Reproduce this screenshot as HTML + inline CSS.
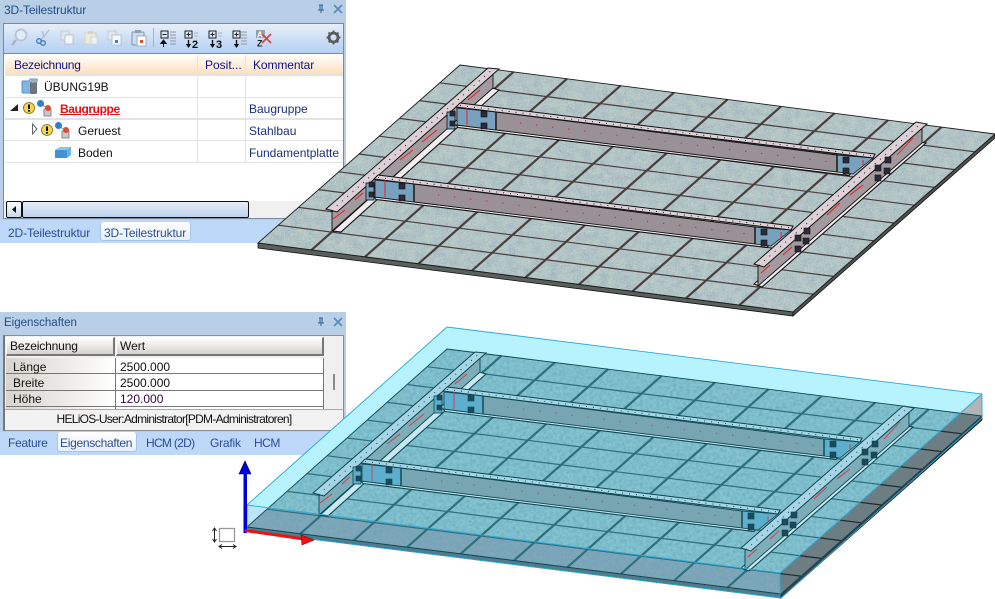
<!DOCTYPE html>
<html><head><meta charset="utf-8"><title>3D-Teilestruktur</title>
<style>
html,body{margin:0;padding:0;background:#fff;width:995px;height:599px;overflow:hidden}
body{position:relative;font-family:"Liberation Sans",sans-serif;font-size:12px}
.a{position:absolute}
.t{position:absolute;white-space:nowrap;line-height:14px;font-size:12px}
.navy{color:#10107f}.blue{color:#1a2f7a}.tab{color:#2a4c9a}.blk{color:#111}
svg{position:absolute;left:0;top:0}
.fl{fill:var(--fl);stroke:var(--ol);stroke-width:1}
.bf{fill:var(--bf);stroke:var(--ol);stroke-width:1.1}
.wb{fill:var(--wb);stroke:var(--ol);stroke-width:.9}
.xw{fill:var(--xw);stroke:var(--ol);stroke-width:.9}
.bl{fill:var(--bl);stroke:var(--ol);stroke-width:.8}
.bt{fill:var(--bt);stroke:var(--ol);stroke-width:.6}
.dt{fill:none;stroke:var(--ol);stroke-width:1;stroke-dasharray:1 6}
.rd{fill:none;stroke:var(--rd);stroke-width:.9}
.rdd{fill:none;stroke:var(--rd);stroke-width:1.1;stroke-dasharray:1.2 15}
</style></head><body>

<!-- Panel 1 -->
<div class="a" style="left:0;top:0;width:346px;height:243px;background:#b9cfe8"></div>
<div class="t" style="left:4px;top:3px;color:#1f4e84;letter-spacing:-.12px">3D-Teilestruktur</div>
<div class="a" style="left:3px;top:23px;width:341px;height:196px;background:#fff;border:1px solid #7d8a99;box-sizing:border-box"></div>
<div class="a" style="left:4px;top:24px;width:339px;height:29px;background:linear-gradient(#e6effa,#b4cff2);border-bottom:1px solid #7d8a99"></div>
<div class="a" style="left:5px;top:54px;width:338px;height:20px;background:linear-gradient(#fff,#fde0bd)"></div>
<div class="a" style="left:5px;top:74px;width:338px;height:2px;background:#e3e3e3"></div>
<div class="a" style="left:5px;top:97px;width:338px;height:1px;background:#e3e3e3"></div>
<div class="a" style="left:5px;top:118px;width:338px;height:2px;background:#e3e3e3"></div>
<div class="a" style="left:5px;top:140px;width:338px;height:1px;background:#e3e3e3"></div>
<div class="a" style="left:5px;top:162px;width:338px;height:1px;background:#e3e3e3"></div>
<div class="a" style="left:197px;top:55px;width:1px;height:108px;background:#e3e3e3"></div>
<div class="a" style="left:245px;top:55px;width:1px;height:108px;background:#e3e3e3"></div>
<div class="t navy" style="left:14px;top:58px;letter-spacing:-.25px">Bezeichnung</div>
<div class="t navy" style="left:205px;top:58px">Posit...</div>
<div class="t navy" style="left:253px;top:58px;letter-spacing:-.1px">Kommentar</div>
<div class="t blk" style="left:44px;top:80px">ÜBUNG19B</div>
<div class="t" style="left:60px;top:102px;color:#e01010;font-weight:bold;text-decoration:underline;letter-spacing:-.4px">Baugruppe</div>
<div class="t blue" style="left:249px;top:102px">Baugruppe</div>
<div class="t blk" style="left:78px;top:124px">Geruest</div>
<div class="t blue" style="left:249px;top:124px">Stahlbau</div>
<div class="t blk" style="left:78px;top:146px">Boden</div>
<div class="t blue" style="left:249px;top:146px">Fundamentplatte</div>
<div class="a" style="left:4px;top:201px;width:339px;height:17px;background:#f0f0f0"></div>
<div class="a" style="left:6px;top:201px;width:16px;height:17px;box-sizing:border-box;background:linear-gradient(#fff,#c8d8ec);border:1px solid #111;border-radius:2px"></div>
<div class="a" style="left:22px;top:201px;width:227px;height:17px;box-sizing:border-box;background:linear-gradient(#e6eefa,#bcd0ea);border:1px solid #111;border-radius:2px"></div>
<div class="a" style="left:0;top:220px;width:346px;height:23px;background:#bdd8f8"></div>
<div class="t tab" style="left:8px;top:226px;letter-spacing:-.12px">2D-Teilestruktur</div>
<div class="a" style="left:100px;top:222px;width:91px;height:19px;box-sizing:border-box;background:linear-gradient(#fff,#e6f0fb);border:1px solid #a7c4e6;border-top:0;border-radius:3px"></div>
<div class="t tab" style="left:104px;top:226px;letter-spacing:-.12px">3D-Teilestruktur</div>

<!-- Panel 2 -->
<div class="a" style="left:0;top:312px;width:346px;height:143px;background:#b9cfe8"></div>
<div class="t" style="left:4px;top:316px;color:#1f4e84;font-size:11.5px">Eigenschaften</div>
<div class="a" style="left:3px;top:335px;width:341px;height:96px;box-sizing:border-box;background:#f0f0f0;border:1px solid #8c8c8c;border-left:2px solid #777"></div>
<div class="a" style="left:6px;top:337px;width:109px;height:19px;box-sizing:border-box;background:linear-gradient(#fff,#d6d2cc);border:1px solid #fff;border-right:2px solid #777;border-bottom:2px solid #777"></div>
<div class="a" style="left:116px;top:337px;width:208px;height:19px;box-sizing:border-box;background:linear-gradient(#fff,#d6d2cc);border:1px solid #fff;border-right:2px solid #777;border-bottom:2px solid #777"></div>
<div class="a" style="left:6px;top:358px;width:109px;height:51px;background:linear-gradient(90deg,#d8d4ce,#fff)"></div>
<div class="a" style="left:116px;top:358px;width:207px;height:51px;background:#fff"></div>
<div class="a" style="left:6px;top:373px;width:317px;height:1px;background:#777"></div>
<div class="a" style="left:6px;top:390px;width:317px;height:1px;background:#777"></div>
<div class="a" style="left:6px;top:406px;width:317px;height:1px;background:#777"></div>
<div class="a" style="left:115px;top:358px;width:1px;height:51px;background:#777"></div>
<div class="a" style="left:323px;top:358px;width:1px;height:51px;background:#777"></div>
<div class="a" style="left:333px;top:374px;width:2px;height:16px;background:#8a8a8a"></div>
<div class="a" style="left:5px;top:409px;width:338px;height:1px;background:#aaa"></div>
<div class="a" style="left:5px;top:410px;width:338px;height:19px;background:#f2f2f2"></div>
<div class="t blk" style="left:10px;top:339px;letter-spacing:-.15px">Bezeichnung</div>
<div class="t blk" style="left:120px;top:339px">Wert</div>
<div class="t blk" style="left:13px;top:360px">Länge</div>
<div class="t blk" style="left:13px;top:376px">Breite</div>
<div class="t blk" style="left:13px;top:392px">Höhe</div>
<div class="t blk" style="left:120px;top:360px">2500.000</div>
<div class="t blk" style="left:120px;top:376px">2500.000</div>
<div class="t" style="left:120px;top:392px;color:#300840">120.000</div>
<div class="t blk" style="left:5px;top:412px;width:338px;text-align:center;letter-spacing:-.72px">HELiOS-User:Administrator[PDM-Administratoren]</div>
<div class="a" style="left:0;top:432px;width:346px;height:23px;background:#bdd8f8"></div>
<div class="a" style="left:57px;top:432px;width:80px;height:20px;box-sizing:border-box;background:linear-gradient(#fff,#e6f0fb);border:1px solid #a7c4e6;border-top:0;border-radius:3px"></div>
<div class="t tab" style="left:8px;top:436px;letter-spacing:-.25px">Feature</div>
<div class="t tab" style="left:60px;top:436px;letter-spacing:-.3px">Eigenschaften</div>
<div class="t tab" style="left:146px;top:436px;letter-spacing:-.7px">HCM (2D)</div>
<div class="t tab" style="left:210px;top:436px;letter-spacing:-.2px">Grafik</div>
<div class="t tab" style="left:254px;top:436px;letter-spacing:-.5px">HCM</div>

<!-- Panel icons -->
<svg width="346" height="455" viewBox="0 0 346 455">
 <defs>
  <g id="pc"><path d="M319 5h4M320 5v5h2V5M318 10h6M321 10v3" fill="none" stroke="#33608f" stroke-width="1"/><path d="M334 5l8 8M342 5l-8 8" stroke="#5d88b8" stroke-width="1.6"/></g>
  <g id="warn"><circle cx="0" cy="0" r="5.5" fill="#f3d84a" stroke="#7b6a1a" stroke-width=".8"/><rect x="-1" y="-3.5" width="2" height="4.5" fill="#111"/><rect x="-1" y="2" width="2" height="1.6" fill="#111"/></g>
  <g id="asm"><path d="M3 3l8 6" stroke="#8aa" stroke-width="1.3"/><rect x="7" y="9" width="7" height="7" fill="#c9c9c9" stroke="#8a8a8a"/><circle cx="3.5" cy="3.5" r="3.5" fill="#2f7fc9"/><circle cx="11" cy="8" r="3" fill="#dd4a3a"/></g>
  <g id="sub"><rect x="0" y="0" width="7" height="7" fill="#dbe6f5" stroke="#222" stroke-width="1"/><path d="M1.5 3.5h4M3.5 1.5v4" stroke="#222"/></g>
  <g id="down"><path d="M3.5 9v6" stroke="#111" stroke-width="1.4"/><path d="M.8 13h5.4L3.5 17z" fill="#111"/></g>
 </defs>
 <use href="#pc"/><use href="#pc" y="313"/>
 <!-- magnifier -->
 <circle cx="21" cy="35" r="5.5" fill="#e2ecf8" stroke="#b7c2cf" stroke-width="1.8"/><path d="M16 40l-4 5" stroke="#a9b2bd" stroke-width="2.4"/>
 <!-- scissors -->
 <path d="M49 30l-8 10M42 31l2 6" stroke="#b5bfcb" stroke-width="1.4" fill="none"/><circle cx="39" cy="41" r="2.3" fill="none" stroke="#3f7fc6" stroke-width="1.4"/><circle cx="43" cy="43" r="2.3" fill="none" stroke="#3f7fc6" stroke-width="1.4"/>
 <!-- copy -->
 <rect x="61" y="31" width="8" height="9" fill="#dfe6ee" stroke="#c2ccd6"/><rect x="65" y="35" width="8" height="9" fill="#f4f7fb" stroke="#b9c5d1"/>
 <!-- paste disabled -->
 <rect x="85" y="33" width="11" height="11" fill="#efe9da" stroke="#d9d3c2"/><rect x="88" y="31" width="5" height="3" fill="#d9d3c2"/><rect x="91" y="37" width="6" height="7" fill="#eef2f6" stroke="#cfd6dd"/>
 <!-- copy dot -->
 <rect x="108" y="31" width="8" height="9" fill="#dfe6ee" stroke="#c2ccd6"/><rect x="112" y="35" width="9" height="10" fill="#f6f9fc" stroke="#b9c5d1"/><rect x="115" y="40" width="3" height="3" fill="#2f87cf"/>
 <!-- paste dot -->
 <rect x="132" y="32" width="12" height="13" rx="1" fill="#cfdcea" stroke="#8294a8"/><rect x="135" y="30" width="6" height="3" fill="#8ea0b3"/><rect x="137" y="36" width="9" height="10" fill="#fff" stroke="#9fb0c0"/><rect x="140" y="40" width="3" height="3" fill="#d9532f"/>
 <path d="M153.500 28v19" stroke="#a6b4c4"/>
 <!-- expand/collapse -->
 <g transform="translate(161,31)"><rect x="0" y="0" width="7" height="7" fill="#dbe6f5" stroke="#222"/><path d="M1.500 3.500h4" stroke="#222"/></g>
 <path d="M163.500 40l-2.700 3.500h5.400zM163.500 43v4" fill="#111" stroke="#111" stroke-width="1"/>
 <path d="M170 32h6M170 35h6M170 38h6M170 41h6M170 44h6" stroke="#8b98a6"/>
 <use href="#sub" x="185" y="31"/><use href="#down" x="185" y="31"/>
 <text x="192" y="48" font-size="11" font-weight="bold" fill="#111" font-family="Liberation Sans">2</text><path d="M194 33h4M194 36h4" stroke="#a9b4c0"/>
 <use href="#sub" x="209" y="31"/><use href="#down" x="209" y="31"/>
 <text x="216" y="48" font-size="11" font-weight="bold" fill="#111" font-family="Liberation Sans">3</text><path d="M218 33h4M218 36h4" stroke="#a9b4c0"/>
 <use href="#sub" x="233" y="31"/><use href="#down" x="233" y="31"/>
 <path d="M241 32h6M241 35h6M241 38h6M241 41h6M241 44h6" stroke="#8b98a6"/>
 <!-- A-Z x -->
 <rect x="256" y="30" width="9" height="8" fill="#9aa0a8"/>
 <text x="257" y="37.500" font-size="8" font-weight="bold" fill="#fff" font-family="Liberation Sans">A</text>
 <text x="257" y="46.500" font-size="9" font-weight="bold" fill="#222" font-family="Liberation Sans">Z</text>
 <path d="M262 34l9 9M271 34l-9 9" stroke="#e0402f" stroke-width="1.600"/>
 <!-- gear -->
 <circle cx="333.500" cy="37.500" r="4.500" fill="none" stroke="#5a5a5a" stroke-width="2.800"/>
 <path d="M333.500 30.500v14M326.500 37.500h14M328.500 32.500l10 10M338.500 32.500l-10 10" stroke="#5a5a5a" stroke-width="1.800" stroke-dasharray="2 10"/>
 <!-- scroll arrow -->
 <path d="M16 206v7l-4-3.500z" fill="#111"/>
 <!-- tree icons -->
 <rect x="22" y="81" width="13" height="12" rx="1" fill="#7fb6e4" stroke="#5a93c8"/><path d="M22 81h7l1-2h7v3" fill="#a8d0ef" stroke="#5a93c8"/>
 <rect x="30" y="81" width="7" height="13" rx="1.500" fill="#6f7478"/><ellipse cx="33.500" cy="81.500" rx="3.500" ry="1.500" fill="#a4a9ad"/>
 <path d="M10 111h8v-7z" fill="#222"/>
 <use href="#warn" x="29" y="108"/><use href="#asm" x="37" y="100"/>
 <path d="M32.500 124l4.500 5-4.500 5z" fill="#fff" stroke="#666"/>
 <use href="#warn" x="47" y="130"/><use href="#asm" x="55" y="122"/>
 <path d="M55 150l5-3h11v8l-4 3H55z" fill="#3f94d8"/><path d="M55 150l5-3h11l-4 3z" fill="#8cc5ef"/><path d="M67 150l4-3v8l-4 3z" fill="#6fb0e3"/>
</svg>

<!-- 3D models -->
<svg width="995" height="599" viewBox="0 0 995 599" style="pointer-events:none">
 <defs>
  <filter id="nz" x="0" y="0" width="100%" height="100%" color-interpolation-filters="sRGB">
   <feTurbulence type="fractalNoise" baseFrequency=".12" numOctaves="4" seed="7"/>
   <feColorMatrix values="0 0 0 0 .5  0 0 0 0 .6  0 0 0 0 .7  .55 .55 0 0 -.42"/>
  </filter>
  <filter id="nw" x="0" y="0" width="100%" height="100%" color-interpolation-filters="sRGB">
   <feTurbulence type="fractalNoise" baseFrequency=".7" numOctaves="2" seed="3"/>
   <feColorMatrix values="0 0 0 0 .9  0 0 0 0 .9  0 0 0 0 .88  .6 .6 0 0 -.45"/>
  </filter>
  <filter id="nz2" x="0" y="0" width="100%" height="100%" color-interpolation-filters="sRGB">
   <feTurbulence type="fractalNoise" baseFrequency=".3" numOctaves="3" seed="11"/>
   <feColorMatrix values="0 0 0 0 .3  0 0 0 0 .55  0 0 0 0 .65  .5 .5 0 0 -.38"/>
  </filter>
  <clipPath id="p1"><polygon points="258,243 793,312 995,134 460,65"/></clipPath>
  <clipPath id="p2"><polygon points="247,527 781,594 982,416 447,349"/></clipPath>
  <clipPath id="strip"><polygon points="780,573 982,394 982,420 781,598"/></clipPath>
  <g id="grid" fill="none">
   <path vector-effect="non-scaling-stroke" stroke-width="1.200" d="M0 .1H1M0 .2H1M0 .3H1M0 .4H1M0 .5H1M0 .6H1M0 .7H1M0 .8H1M0 .9H1"/>
  </g>
  <g id="gridv" fill="none">
   <path vector-effect="non-scaling-stroke" stroke-width="2.200" d="M.1 0V1M.2 0V1M.3 0V1M.4 0V1M.5 0V1M.6 0V1M.7 0V1M.8 0V1M.9 0V1"/>
  </g>
  <g id="cross">
   <polygon class="bf" points="456,125 851,173 849,175.500 458,127.500"/>
   <polygon class="xw" points="496,112 837,155 837,172 496,130"/>
   <polygon class="bl" points="457,108 496,112 496,130 457,125"/>
   <polygon class="bl" points="837,155 873,158 853,174 837,172"/>
   <path d="M496 112v18M837 155v17" stroke="var(--ol)" stroke-width="1.400"/>
   <polygon class="fl" points="460,103 875,154 873,158 456,107"/>
   <path class="dt" d="M460 105.500L873 156"/>
   <path class="rd" d="M467 108v17M863 160v5"/>
   <path class="rdd" d="M520 123L830 162"/>
   <rect class="bt" x="481" y="111" width="6" height="6"/><rect class="bt" x="481" y="123" width="6" height="6"/>
   <rect class="bt" x="843" y="157" width="6" height="6"/><rect class="bt" x="843" y="168" width="6" height="6"/>
  </g>
  <g id="beams">
   <polygon class="bf" points="333,231 341,232 499,90 492,88"/>
   <polygon class="wb" points="332,212 332,231 493,88 493,72"/>
   <polygon class="fl" points="326,209 337,212 499,69 488,68"/>
   <path class="dt" d="M331.500 210.500L493.500 68.500"/>
   <path class="rd" d="M333 219L345 210M355 200L363 193M400 160L413 150M422 142L437 130M468 100L480 90"/>
   <rect class="bl" x="366" y="183" width="8" height="17"/><rect class="bl" x="447" y="112" width="8" height="17"/>
   <rect class="bt" x="369" y="182" width="5" height="5"/><rect class="bt" x="369" y="192" width="5" height="5"/>
   <rect class="bt" x="450" y="111" width="5" height="5"/><rect class="bt" x="450" y="121" width="5" height="5"/>
   <use href="#cross"/>
   <use href="#cross" transform="translate(-82,72)"/>
   <polygon class="bf" points="754,284 762,287 926,143 918,142"/>
   <polygon class="wb" points="758,266 758,286 922,143 922,127"/>
   <polygon class="fl" points="754,264 764,267 927,124 916,122"/>
   <path class="dt" d="M759 265.500L921.500 123"/>
   <path class="rd" d="M761 273L770 265M783 255L792 247M827 215L840 203M850 195L863 185M897 155L913 138"/>
   <rect class="bt" x="885" y="157" width="6" height="6"/><rect class="bt" x="875" y="165" width="6" height="6"/><rect class="bt" x="884" y="168" width="6" height="6"/><rect class="bt" x="875" y="175" width="6" height="6"/>
   <rect class="bt" x="804" y="228" width="6" height="6"/><rect class="bt" x="795" y="235" width="6" height="6"/><rect class="bt" x="803" y="238" width="6" height="6"/><rect class="bt" x="795" y="246" width="6" height="6"/>
  </g>
 </defs>

 <!-- upper plate -->
 <polygon points="258,243 793,312 793,316 258,248" fill="#59605c" stroke="#111" stroke-width=".8"/>
 <polygon points="793,312 995,134 995,138 793,316" fill="#4e5250" stroke="#111" stroke-width=".8"/>
 <polygon points="258,243 793,312 995,134 460,65" fill="#aec3c2"/>
 <g clip-path="url(#p1)">
  <rect x="258" y="65" width="737" height="247" filter="url(#nz)"/>
  <rect x="258" y="65" width="737" height="247" filter="url(#nw)"/>
 </g>
 <g transform="matrix(535 69 202 -178 258 243)" stroke="#4a3e3e"><use href="#grid"/><use href="#gridv"/></g>
 <polygon points="258,243 793,312 995,134 460,65" fill="none" stroke="#1c1c1c" stroke-width=".9"/>
 <g style="--fl:#ddd1d7;--bf:#f2eef0;--wb:#a29a9e;--xw:#999195;--bl:#78a1bd;--bt:#2b2a3a;--ol:#111;--rd:#f01818"><use href="#beams"/></g>

 <!-- lower box -->
 <polygon points="247,505 447,327 982,394 780,573" fill="#b6f3ff"/>
 <polygon points="247,505 780,573 781,598 247,531" fill="#bde6f5"/>
 <polygon points="780,573 982,394 982,420 781,598" fill="#b2b4b6"/>
 <polygon points="247,527 781,594 781,598 247,531" fill="#4f7d8b" stroke="#0f3f4c" stroke-width=".8"/>
 <polygon points="781,594 982,416 982,420 781,598" fill="#3a4246" stroke="#111" stroke-width=".8"/>
 <polygon points="247,527 781,594 982,416 447,349" fill="#84c4d0"/>
 <g clip-path="url(#p2)">
  <rect x="247" y="349" width="735" height="245" filter="url(#nz2)"/>
  <polygon points="247,505 780,573 781,598 247,531" fill="#7a9db2" opacity=".72"/>
  <polygon points="780,573 982,394 982,420 781,598" fill="#6b787d" opacity=".92"/>
 </g>
 <g transform="matrix(534 67 201 -178 247 527)" stroke="#2f6f7c"><use href="#grid"/><use href="#gridv"/></g>
 <g clip-path="url(#strip)"><g clip-path="url(#p2)"><g transform="matrix(534 67 201 -178 247 527)" stroke="#262a2c"><use href="#grid"/></g></g></g>
 <polygon points="247,527 781,594 982,416 447,349" fill="none" stroke="#0f4753" stroke-width=".9"/>
 <g transform="translate(-13,284)" style="--fl:#a6d5e5;--bf:#c8e9f1;--wb:#7dadb8;--xw:#77a6b2;--bl:#5eaecd;--bt:#1a4a5c;--ol:#0d4652;--rd:#d8394a"><use href="#beams"/></g>
 <polygon points="247,505 447,327 982,394 982,418 781,598 247,531" fill="none" stroke="#2aa8da" stroke-width=".9"/>
 <path d="M247 505L780 573L982 394M780 573V598" fill="none" stroke="#2aa8da" stroke-width=".9"/>

 <!-- triad -->
 <rect x="243.500" y="473" width="3.500" height="60" fill="#0000d8"/>
 <path d="M245 461l-6 13h12z" fill="#0000d8" stroke="#00005a" stroke-width=".6"/>
 <path d="M245 530.500L304 539" stroke="#f01010" stroke-width="3"/>
 <path d="M314 540l-13-5 1 10z" fill="#f01010" stroke="#700" stroke-width=".6"/>
 <!-- size icon -->
 <rect x="219.500" y="528.500" width="15" height="13" fill="#fff" stroke="#9a9a9a" stroke-width="1.300"/>
 <path d="M214.500 529v12M212.500 531l2-3 2 3M212.500 539l2 3 2-3M220 546.500h15M222 544.500l-3 2 3 2M233 544.500l3 2-3 2" fill="none" stroke="#222" stroke-width="1"/>
</svg>
</body></html>
